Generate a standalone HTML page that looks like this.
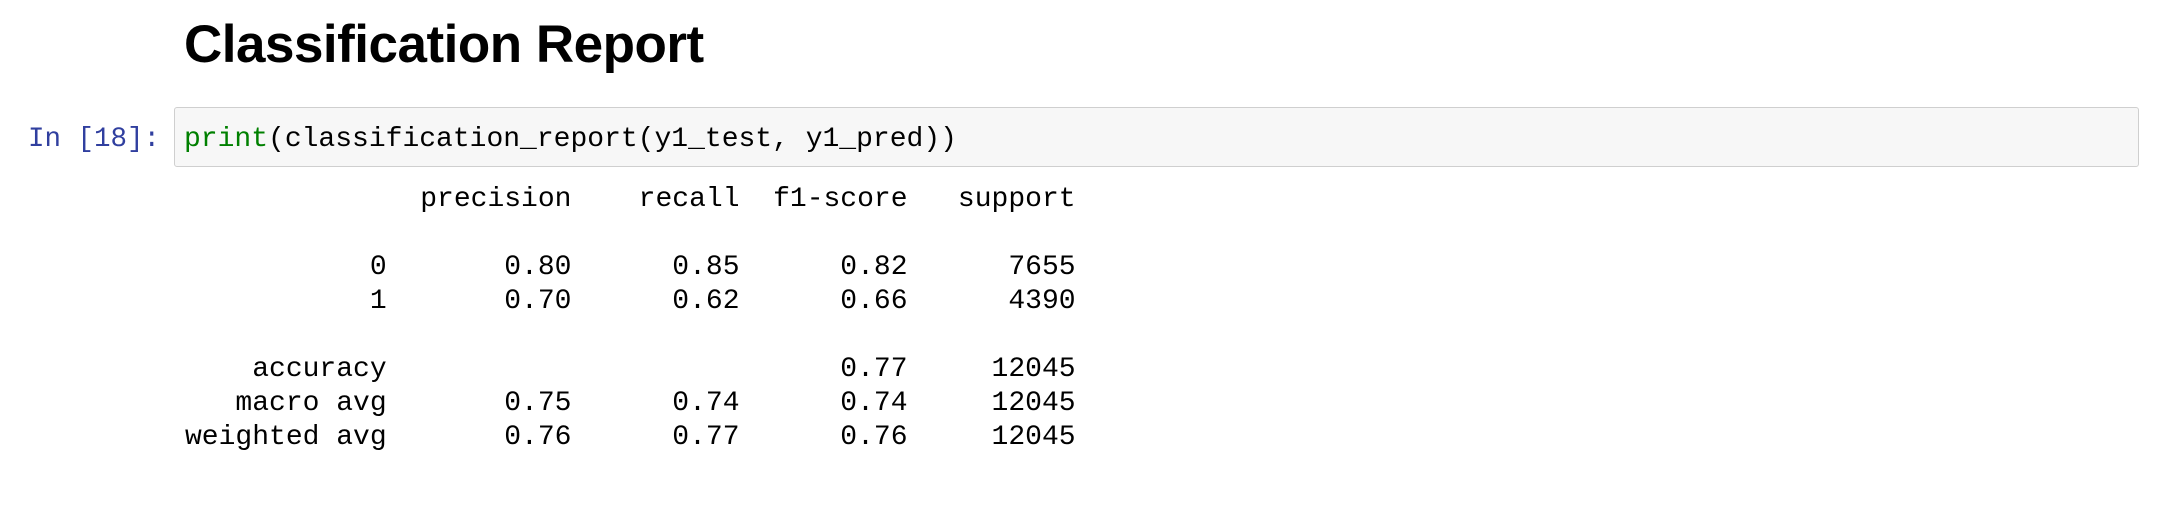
<!DOCTYPE html>
<html><head><style>
body{margin:0;width:2162px;height:524px;background:#fff;position:relative;overflow:hidden}
h1{position:absolute;left:184px;top:14px;margin:0;font:bold 53px "Liberation Sans",sans-serif;color:#000;letter-spacing:-0.5px}
.prompt{position:absolute;left:28px;top:123px;font:27.5px/34px "Liberation Mono",monospace;color:#303F9F}
.box{position:absolute;left:174px;top:107px;width:1963px;height:58px;background:#f7f7f7;border:1px solid #cfcfcf;border-radius:3px}
.code{position:absolute;left:184px;top:123px;font:28px/34px "Liberation Mono",monospace;color:#000;white-space:pre}
.g{color:#008000}
pre{position:absolute;left:185px;top:183px;margin:0;font:28px/34px "Liberation Mono",monospace;color:#000}
</style></head><body>
<h1>Classification Report</h1>
<div class="box"></div>
<div class="prompt">In [18]:</div>
<div class="code"><span class="g">print</span>(classification_report(y1_test, y1_pred))</div>
<pre>              precision    recall  f1-score   support

           0       0.80      0.85      0.82      7655
           1       0.70      0.62      0.66      4390

    accuracy                           0.77     12045
   macro avg       0.75      0.74      0.74     12045
weighted avg       0.76      0.77      0.76     12045
</pre>
</body></html>
